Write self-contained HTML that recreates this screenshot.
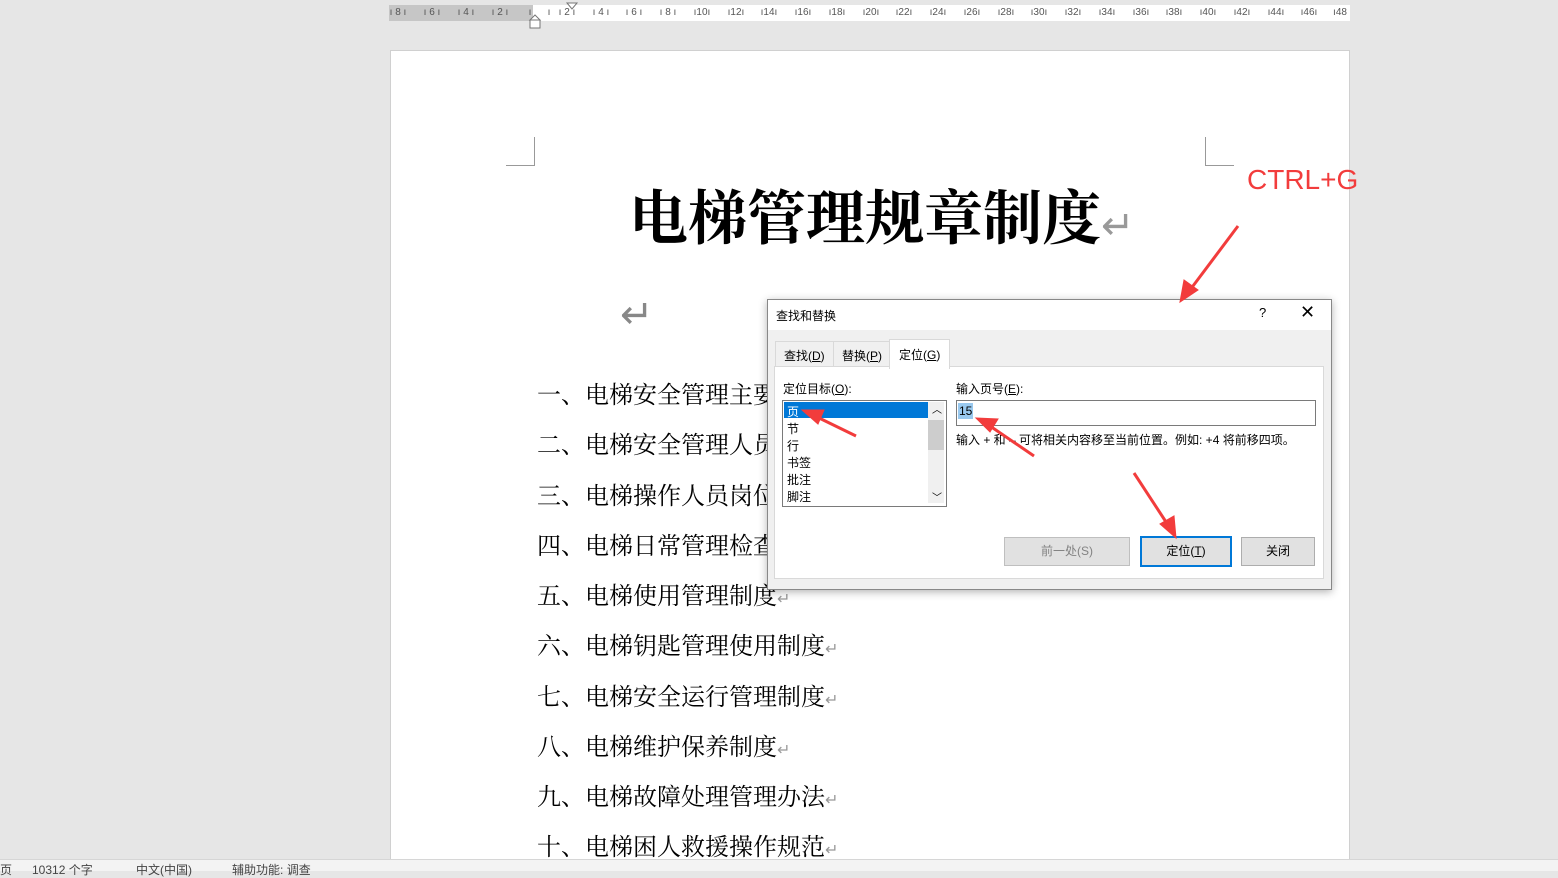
<!DOCTYPE html><html><head><meta charset="utf-8"><style>
body{margin:0;width:1558px;height:870px;background:#e6e6e6;position:relative;overflow:hidden;font-family:"Liberation Sans","Noto Sans CJK SC",sans-serif}
.a{position:absolute}
.serif{font-family:"Liberation Serif","Noto Serif CJK SC",serif}
.li{position:absolute;left:537px;font-size:24px;color:#000;white-space:nowrap}
.ret{color:#999;font-size:16px}
.d{font-size:12px;color:#000}
.btn{position:absolute;top:537px;height:27px;border:1px solid #adadad;background:#e1e1e1;font-size:12px;text-align:center;line-height:27px}
.r{position:absolute;top:7px;font-size:10px;color:#555;transform:translateX(-50%);white-space:nowrap}
</style></head><body>
<div class="a" style="left:389px;top:5px;width:961px;height:16px;background:#fff"></div>
<div class="a" style="left:389px;top:5px;width:144px;height:16px;background:#c6c6c6"></div>
<div class="r" style="left:398px">ı 8 ı</div><div class="r" style="left:432px">ı 6 ı</div><div class="r" style="left:466px">ı 4 ı</div><div class="r" style="left:500px">ı 2 ı</div><div class="r" style="left:530px">ı</div><div class="r" style="left:549px">ı</div>
<div class="r" style="left:567px">ı 2 ı</div><div class="r" style="left:601px">ı 4 ı</div><div class="r" style="left:634px">ı 6 ı</div><div class="r" style="left:668px">ı 8 ı</div><div class="r" style="left:702px">ı10ı</div><div class="r" style="left:736px">ı12ı</div><div class="r" style="left:769px">ı14ı</div><div class="r" style="left:803px">ı16ı</div><div class="r" style="left:837px">ı18ı</div><div class="r" style="left:871px">ı20ı</div><div class="r" style="left:904px">ı22ı</div><div class="r" style="left:938px">ı24ı</div><div class="r" style="left:972px">ı26ı</div><div class="r" style="left:1006px">ı28ı</div><div class="r" style="left:1039px">ı30ı</div><div class="r" style="left:1073px">ı32ı</div><div class="r" style="left:1107px">ı34ı</div><div class="r" style="left:1141px">ı36ı</div><div class="r" style="left:1174px">ı38ı</div><div class="r" style="left:1208px">ı40ı</div><div class="r" style="left:1242px">ı42ı</div><div class="r" style="left:1276px">ı44ı</div><div class="r" style="left:1309px">ı46ı</div><div class="r" style="left:1340px">ı48</div>
<svg class="a" style="left:527px;top:2px" width="52" height="28"><polygon points="40,1 50,1 45,7" fill="#fff" stroke="#777"/><polygon points="3,18 8,13 13,18" fill="#fff" stroke="#777"/><rect x="3" y="18" width="10" height="8" fill="#fff" stroke="#777"/></svg>
<div class="a" style="left:390px;top:50px;width:958px;height:812px;background:#fff;border:1px solid #d0d0d0"></div>
<div class="a" style="left:506px;top:137px;width:28px;height:28px;border-right:1px solid #999;border-bottom:1px solid #999"></div>
<div class="a" style="left:1205px;top:137px;width:28px;height:28px;border-left:1px solid #999;border-bottom:1px solid #999"></div>
<div class="a serif" style="left:629px;top:171px;font-size:59px;font-weight:bold;white-space:nowrap">电梯管理规章制度<span style="color:#999;font-size:40px;font-weight:normal">↵</span></div>
<div class="a" style="left:620px;top:292px;font-size:40px;color:#888">↵</div>
<div class="li serif" style="top:375px">一、电梯安全管理主要</div>
<div class="li serif" style="top:425px">二、电梯安全管理人员</div>
<div class="li serif" style="top:476px">三、电梯操作人员岗位</div>
<div class="li serif" style="top:526px">四、电梯日常管理检查</div>
<div class="li serif" style="top:576px">五、电梯使用管理制度<span class="ret">↵</span></div>
<div class="li serif" style="top:626px">六、电梯钥匙管理使用制度<span class="ret">↵</span></div>
<div class="li serif" style="top:677px">七、电梯安全运行管理制度<span class="ret">↵</span></div>
<div class="li serif" style="top:727px">八、电梯维护保养制度<span class="ret">↵</span></div>
<div class="li serif" style="top:777px">九、电梯故障处理管理办法<span class="ret">↵</span></div>
<div class="li serif" style="top:827px">十、电梯困人救援操作规范<span class="ret">↵</span></div>
<div class="a" style="left:1247px;top:164px;font-size:28px;color:#f23c3c">CTRL+G</div>
<div class="a" style="left:767px;top:299px;width:563px;height:289px;background:#f0f0f0;border:1px solid #888;box-shadow:0 2px 8px rgba(0,0,0,.3)"></div>
<div class="a" style="left:768px;top:300px;width:563px;height:30px;background:#fff"></div>
<div class="a d" style="left:776px;top:307px">查找和替换</div>
<div class="a" style="left:1259px;top:305px;font-size:13px">?</div>
<div class="a" style="left:1300px;top:302px;font-size:18px">✕</div>
<div class="a" style="left:775px;top:341px;width:57px;height:25px;border:1px solid #d9d9d9;border-bottom:none"></div>
<div class="a d" style="left:784px;top:347px">查找(<u>D</u>)</div>
<div class="a" style="left:833px;top:341px;width:56px;height:25px;border:1px solid #d9d9d9;border-bottom:none"></div>
<div class="a d" style="left:842px;top:347px">替换(<u>P</u>)</div>
<div class="a" style="left:774px;top:366px;width:548px;height:211px;background:#fff;border:1px solid #d9d9d9"></div>
<div class="a" style="left:889px;top:339px;width:59px;height:29px;background:#fff;border:1px solid #d9d9d9;border-bottom:none"></div>
<div class="a d" style="left:899px;top:346px">定位(<u>G</u>)</div>
<div class="a d" style="left:783px;top:380px">定位目标(<u>O</u>):</div>
<div class="a d" style="left:956px;top:380px">输入页号(<u>E</u>):</div>
<div class="a" style="left:782px;top:400px;width:163px;height:105px;border:1px solid #7a7a7a;background:#fff"></div>
<div class="a" style="left:784px;top:402px;width:144px;height:16px;background:#0078d7"></div>
<div class="a" style="left:928px;top:402px;width:16px;height:101px;background:#f0f0f0"></div>
<div class="a" style="left:928px;top:420px;width:16px;height:30px;background:#cdcdcd"></div>
<div class="a" style="left:932px;top:401px;font-size:10px">︿</div>
<div class="a" style="left:932px;top:489px;font-size:10px">﹀</div>
<div class="a d" style="left:787px;top:403px;color:#fff">页</div>
<div class="a d" style="left:787px;top:420px">节</div>
<div class="a d" style="left:787px;top:437px">行</div>
<div class="a d" style="left:787px;top:454px">书签</div>
<div class="a d" style="left:787px;top:471px">批注</div>
<div class="a d" style="left:787px;top:488px">脚注</div>
<div class="a" style="left:956px;top:400px;width:358px;height:24px;border:1px solid #7a7a7a;background:#fff"></div>
<div class="a d" style="left:958px;top:403px;background:#99c9ef;padding:1px 1px">15</div>
<div class="a d" style="left:956px;top:431px;font-size:12px;white-space:nowrap">输入 + 和 – 可将相关内容移至当前位置。例如: +4 将前移四项。</div>
<div class="btn" style="left:1004px;width:124px;color:#838383;background:#e1e1e1;border-color:#bfbfbf">前一处(S)</div>
<div class="btn" style="left:1140px;width:88px;border:2px solid #0078d7;top:536px">定位(<u>T</u>)</div>
<div class="btn" style="left:1241px;width:72px">关闭</div>
<svg class="a" style="left:0;top:0" width="1558" height="870">
<g fill="#f23c3c" stroke="#f23c3c">
<line x1="1238" y1="226" x2="1190" y2="290" stroke-width="3"/><polygon points="1180,302 1184,280 1198,290"/>
<line x1="856" y1="436" x2="815" y2="416" stroke-width="3"/><polygon points="802,410 824,410 818,424"/>
<line x1="1034" y1="456" x2="990" y2="426" stroke-width="3"/><polygon points="976,418 998,419 990,432"/>
<line x1="1134" y1="473" x2="1168" y2="525" stroke-width="3"/><polygon points="1176,538 1160,524 1174,516"/>
</g></svg>
<div class="a" style="left:0;top:859px;width:1558px;height:11px;background:#f3f3f3;border-top:1px solid #d6d6d6"></div>
<div class="a" style="left:0;top:861px;font-size:12px;color:#444;white-space:nowrap">页 &nbsp;&nbsp;&nbsp;&nbsp;&nbsp;10312 个字 &nbsp;&nbsp;&nbsp;&nbsp;&nbsp;&nbsp;&nbsp;&nbsp;&nbsp;&nbsp;&nbsp;&nbsp;中文(中国) &nbsp;&nbsp;&nbsp;&nbsp;&nbsp;&nbsp;&nbsp;&nbsp;&nbsp;&nbsp;&nbsp;辅助功能: 调查</div>
</body></html>
